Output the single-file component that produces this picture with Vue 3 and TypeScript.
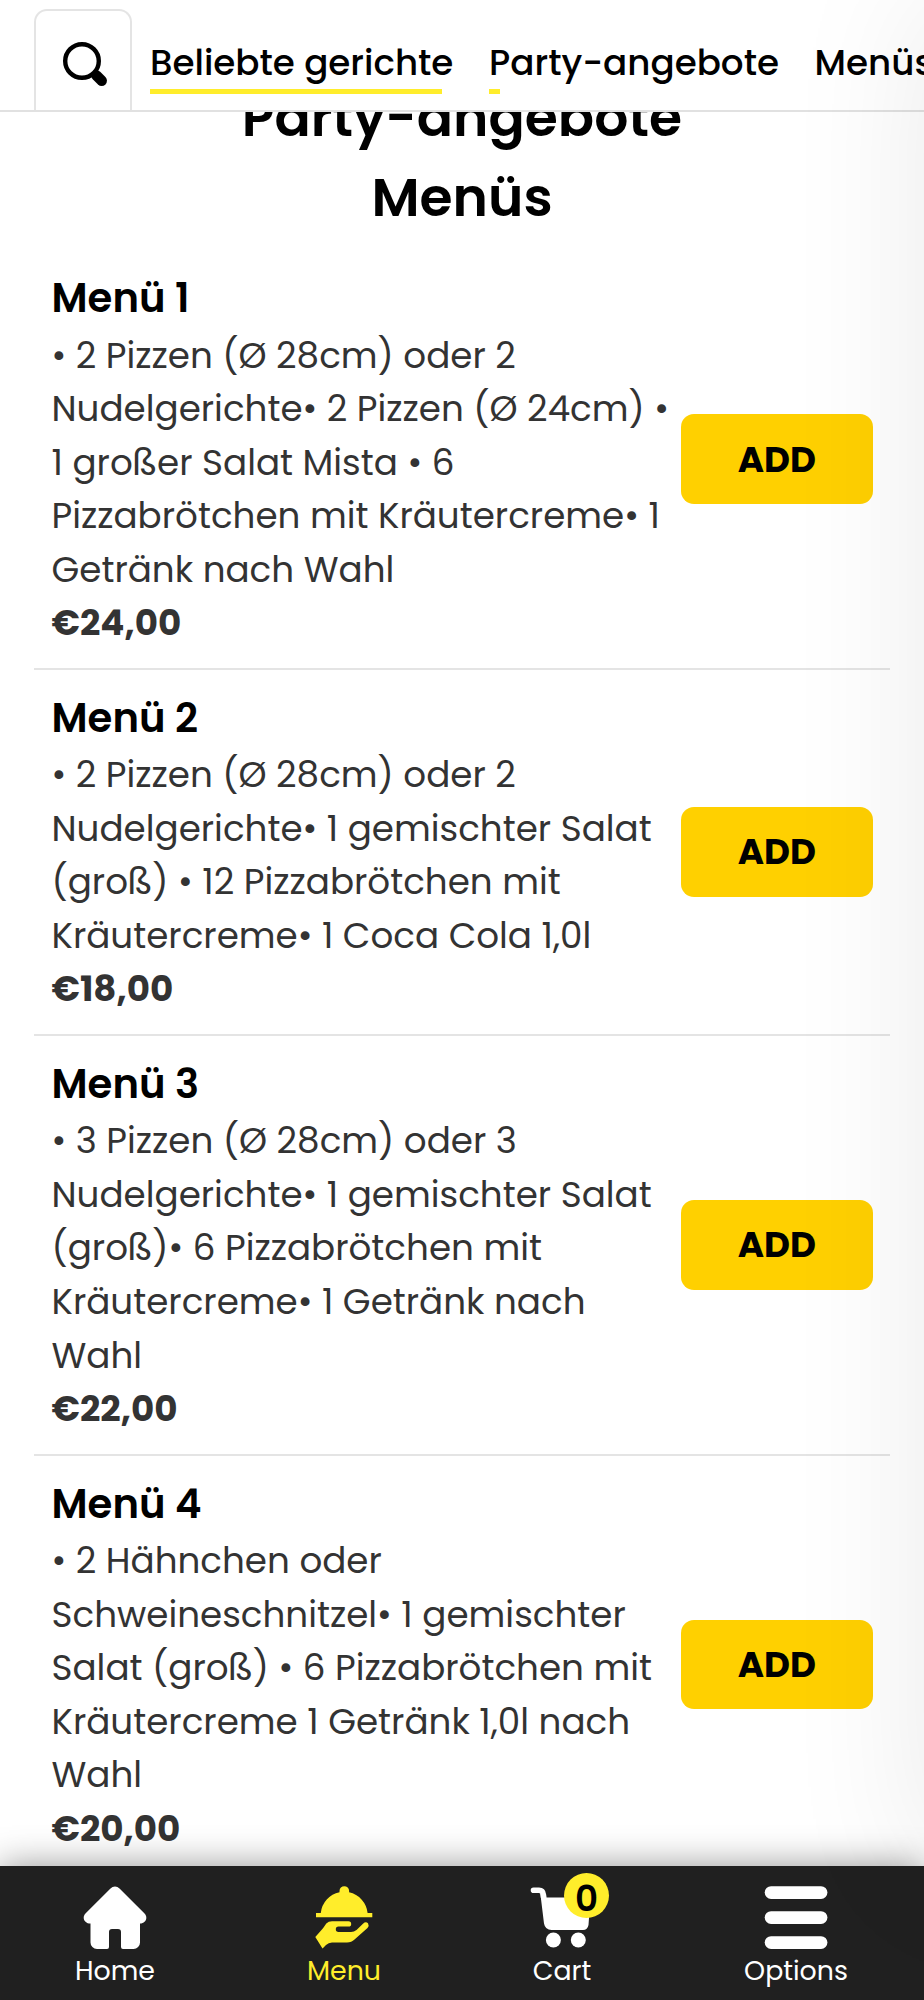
<script setup lang="ts">
interface Dish {
  title: string
  text: string
  price: string
}

const tabs = [
  { text: 'Beliebte gerichte', bar: 292 },
  { text: 'Party-angebote', bar: 11 },
  { text: 'Menüs', bar: 0 },
]

const dishes: Dish[] = [
  {
    title: 'Menü 1',
    text: '• 2 Pizzen (Ø 28cm) oder 2 Nudelgerichte• 2 Pizzen (Ø 24cm) • 1 großer Salat Mista • 6 Pizzabrötchen mit Kräutercreme• 1 Getränk nach Wahl',
    price: '€24,00',
  },
  {
    title: 'Menü 2',
    text: '• 2 Pizzen (Ø 28cm) oder 2 Nudelgerichte• 1 gemischter Salat (groß) • 12 Pizzabrötchen mit Kräutercreme• 1 Coca Cola 1,0l',
    price: '€18,00',
  },
  {
    title: 'Menü 3',
    text: '• 3 Pizzen (Ø 28cm) oder 3 Nudelgerichte• 1 gemischter Salat (groß)• 6 Pizzabrötchen mit Kräutercreme• 1 Getränk nach Wahl',
    price: '€22,00',
  },
  {
    title: 'Menü 4',
    text: '• 2 Hähnchen oder Schweineschnitzel• 1 gemischter Salat (groß) • 6 Pizzabrötchen mit Kräutercreme 1 Getränk 1,0l nach Wahl',
    price: '€20,00',
  },
]
</script>

<template>
  <div class="screen">
    <header class="top">
      <button class="search" aria-label="Suche">
        <svg width="46" height="46" viewBox="0 0 46 46">
          <circle cx="20" cy="20" r="16.8" fill="none" stroke="#000" stroke-width="4.4" />
          <path d="M31 31l3 3" stroke="#000" stroke-width="5" />
          <path d="M34.5 34.5l5.2 5.2" stroke="#000" stroke-width="10.5" stroke-linecap="round" />
        </svg>
      </button>
      <nav class="tabs">
        <a v-for="tab in tabs" :key="tab.text" class="tab">
          <span>{{ tab.text }}</span>
          <i class="bar" :style="{ width: tab.bar + 'px' }"></i>
        </a>
      </nav>
    </header>

    <main class="content">
      <h2 class="heading">Party-angebote</h2>
      <h2 class="heading">Menüs</h2>
      <section class="list">
        <article v-for="dish in dishes" :key="dish.title" class="dish">
          <div class="info">
            <h3 class="title">{{ dish.title }}</h3>
            <p class="text">{{ dish.text }}</p>
            <p class="text price">{{ dish.price }}</p>
          </div>
          <button class="add">ADD</button>
        </article>
      </section>
    </main>

    <footer class="dock">
      <a class="dock-item">
        <svg width="64" height="64" viewBox="0 0 64 64" fill="#fff">
          <path d="M27.5 2.4a6.4 6.4 0 0 1 9 0L61.3 27.2C65.6 31.5 62.5 37.5 57 37.5V56.5a6.5 6.5 0 0 1-6.5 6.5H40a2 2 0 0 1-2-2V46a3 3 0 0 0-3-3H29a3 3 0 0 0-3 3V61a2 2 0 0 1-2 2H14a6.5 6.5 0 0 1-6.5-6.5V37.5C1.5 37.5-1.6 31.5 2.7 27.2Z" />
        </svg>
        <span>Home</span>
      </a>
      <a class="dock-item active">
        <svg width="64" height="64" viewBox="0 0 64 64" fill="#ffed2b">
          <path d="M4 27H8.8A23.5 23.5 0 0 1 27.5 6.3V5a4.8 4.8 0 0 1 9.6 0V6.3A23.5 23.5 0 0 1 55.6 27H60.3V31.2H4Z" />
          <path d="M3.3 51 11 42.2 14.3 37.5Q16.5 35.2 20 35.2H36.5a2.7 2.7 0 0 1 0 5.4H26.5a2.7 2.7 0 0 0 0 5.4H39Q42 46 44.5 44L51 37.7Q53.7 35.3 56 37.2 57.5 39.8 55.5 42L42.5 53.5Q39.5 56.5 35 56.5H20Q16.5 56.5 14 59L10.5 62.5Z" />
        </svg>
        <span>Menu</span>
      </a>
      <a class="dock-item">
        <span class="cart">
          <svg width="64" height="64" viewBox="0 0 64 64" fill="#fff">
            <path d="M3.5 4.2H9Q12.9 4.2 13.3 8.5L13.6 11.5" fill="none" stroke="#fff" stroke-width="5.6" stroke-linecap="round" />
            <path d="M10.4 8H16L16.3 11.5H60.5L58.5 39Q57.5 44 53 44H21.5Q15.2 44 14 37.5Z" />
            <circle cx="23.4" cy="54" r="7.5" />
            <circle cx="48.3" cy="54" r="7.5" />
          </svg>
          <b class="badge">0</b>
        </span>
        <span>Cart</span>
      </a>
      <a class="dock-item">
        <svg width="64" height="64" viewBox="0 0 64 64" fill="#fff">
          <rect x=".7" y=".2" width="62.7" height="12.7" rx="6.35" />
          <rect x=".7" y="25.2" width="62.7" height="12.7" rx="6.35" />
          <rect x=".7" y="50.2" width="62.7" height="12.7" rx="6.35" />
        </svg>
        <span>Options</span>
      </a>
    </footer>
    <div class="drawer"></div>
  </div>
</template>

<style>
body {
  margin: 0;
  background: #fff;
}
</style>

<style scoped>
.screen {
  position: relative;
  width: 924px;
  height: 2000px;
  overflow: hidden;
  display: flex;
  flex-direction: column;
  background: #fff;
  color: #000;
  font-family: Poppins, Inter, 'Liberation Sans', sans-serif;
}
h2, h3, p {
  margin: 0;
}
button {
  font: inherit;
  color: inherit;
  padding: 0;
}
.top {
  flex: none;
  box-sizing: border-box;
  height: 112px;
  border-bottom: 2px solid #e1e1e1;
  display: flex;
  align-items: flex-end;
  background: #fff;
}
.search {
  flex: none;
  box-sizing: border-box;
  width: 98px;
  height: 101px;
  margin-left: 34px;
  border: 2px solid #e4e4e4;
  border-bottom: 0;
  border-radius: 13px 13px 0 0;
  background: none;
  padding: 30px 0 0 26px;
  display: flex;
  align-items: flex-start;
}
.tabs {
  display: flex;
  gap: 35.7px;
  margin-left: 18px;
  height: 110px;
  box-sizing: border-box;
  padding-top: 36px;
}
.tab {
  display: flex;
  flex-direction: column;
  line-height: 53px;
  font-size: 35.7px;
  font-weight: 500;
  white-space: nowrap;
}
.bar {
  height: 5px;
  background: #ffed2b;
}
.content {
  flex: 1;
  min-height: 0;
  overflow: hidden;
}
.heading {
  height: 80.36px;
  line-height: 80.36px;
  font-size: 53.57px;
  font-weight: 600;
  text-align: center;
}
.heading:first-child {
  margin-top: -34px;
}
.list {
  margin: 11.6px 34px 0;
}
.dish {
  display: flex;
  align-items: center;
  padding: 18px 17px 18px 17.5px;
  border-bottom: 2px solid #e4e4e4;
}
.info {
  flex: 1;
  min-width: 0;
}
.title {
  line-height: 60.26px;
  font-size: 40.18px;
  font-weight: 600;
}
.text {
  line-height: 53.57px;
  font-size: 35.71px;
  color: #333;
}
.price {
  font-weight: 700;
}
.add {
  flex: none;
  width: 192.5px;
  height: 89.5px;
  border: 0;
  border-radius: 13px;
  background: #ffd000;
  font-size: 35.71px;
  font-weight: 700;
}
.dock {
  flex: none;
  position: relative;
  height: 134px;
  display: grid;
  grid-template-columns: 230px 228px 208px 260px;
  background: #202020;
  box-shadow: 0 0 34px rgba(0, 0, 0, 0.42);
}
.dock-item {
  display: flex;
  flex-direction: column;
  align-items: center;
  padding-top: 20px;
  color: #fff;
  font-size: 26.8px;
  line-height: 41px;
}
.active {
  color: #ffed2b;
}
.cart {
  position: relative;
  height: 64px;
}
.badge {
  position: absolute;
  left: 34px;
  top: -13.5px;
  width: 45px;
  height: 45px;
  border-radius: 50%;
  background: #ffed2b;
  color: #000;
  text-align: center;
  font-size: 35.71px;
  font-weight: 600;
  line-height: 51px;
}
.drawer {
  position: absolute;
  left: 924px;
  top: 0;
  width: 600px;
  height: 1866px;
  box-shadow: 0 0 134px rgba(0, 0, 0, 0.085);
  pointer-events: none;
}
</style>
